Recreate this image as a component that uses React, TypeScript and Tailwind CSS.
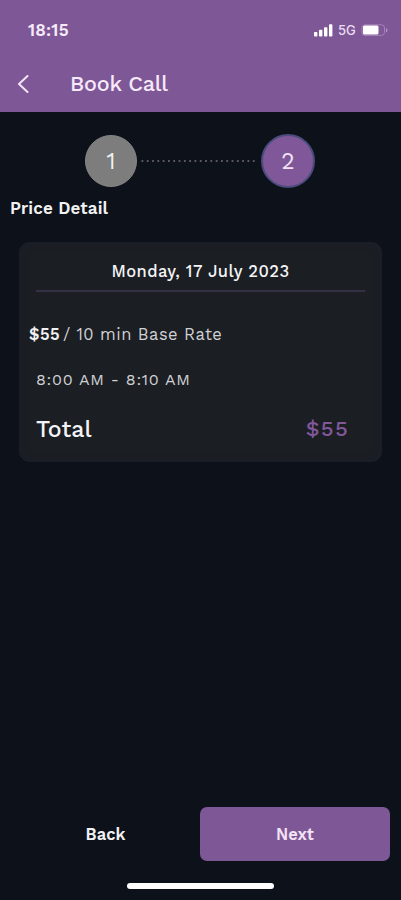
type StepProps = {
  label: string;
  active?: boolean;
};

function StatusBar() {
  return (
    <div className="flex h-[60px] items-center justify-between pl-[28px] pr-[13px]">
      <span className="text-[17px] font-semibold leading-none tracking-[0.2px] text-[#f6e9fa]">18:15</span>
      <div className="flex items-center">
        <svg className="h-[13px] w-[20px]" viewBox="0 0 20 13" fill="#fff">
          <rect x="0" y="8" width="3.4" height="4.5" rx="0.8" />
          <rect x="5" y="5.8" width="3.4" height="6.7" rx="0.8" />
          <rect x="10" y="3.2" width="3.4" height="9.3" rx="0.8" />
          <rect x="15" y="0.3" width="3.4" height="12.2" rx="0.8" />
        </svg>
        <span className="ml-[4px] mt-[1px] w-[19px] font-['Inter',sans-serif] text-[13px] font-medium leading-none text-[#eadcf1]">5G</span>
        <svg className="ml-[4px] h-[13px] w-[27px]" viewBox="0 0 27 13" fill="none">
          <rect x="1" y="0.8" width="22.5" height="10.6" rx="3" stroke="#a583b7" />
          <rect x="2" y="1.600" width="15.5" height="9" rx="1.5" fill="#fff" />
          <path d="M25 4c2 .8 2 3.6 0 4.4z" fill="#b697c5" />
        </svg>
      </div>
    </div>
  );
}

function Step({ label, active }: StepProps) {
  return (
    <div
      className={
        active
          ? "flex size-[54px] items-center justify-center rounded-full border-2 border-[#494c7c] bg-[#80589a] pt-[2px] text-[23px] text-[#f3e3f5]"
          : "flex size-[52px] items-center justify-center rounded-full border border-[#858585] bg-[#7d7d7d] pt-[2px] text-[23px] text-[#f0f0f0]"
      }
    >
      {label}
    </div>
  );
}

export default function App() {
  return (
    <main className="flex h-[900px] w-[401px] flex-col overflow-hidden bg-[#0d1119] font-['Work_Sans','Inter',sans-serif] text-[#f1f1f3]">
      <header className="h-[112px] shrink-0 bg-[#7e5796]">
        <StatusBar />
        <div className="flex h-[47px] items-center pl-[17px]">
          <button type="button" aria-label="Go back" className="w-[53px]">
            <svg className="h-[18px] w-[12px]" viewBox="0 0 12 18" fill="none" stroke="#f3e3f5" strokeWidth="2">
              <path d="M10.500 1 2 9l8.5 8" strokeLinecap="round" strokeLinejoin="round" />
            </svg>
          </button>
          <h1 className="whitespace-nowrap text-[21.5px] font-medium leading-none tracking-[-0.2px] text-[#f6e9fa]">Book Call</h1>
        </div>
      </header>

      <div className="flex h-[98px] shrink-0 items-center pl-[85px]">
        <Step label="1" />
        <svg className="mx-[4px] h-[2px] w-[116px]" viewBox="0 0 116 2">
          <line x1="0.5" y1="1" x2="116" y2="1" stroke="#77727f" strokeWidth="1.6" strokeDasharray="1.8 3.5" />
        </svg>
        <Step label="2" active />
      </div>

      <h2 className="-mt-[11px] h-[20px] pl-[10px] text-[17px] font-semibold leading-[19px] tracking-[0.1px]">Price Detail</h2>

      <section className="ml-[19px] mt-[23px] h-[220px] w-[363px] rounded-[11px] bg-[#1b1e23] shadow-[inset_0_0_8px_#1c1f2b]">
        <div className="mx-[17px] flex h-[50px] items-center justify-center border-b-2 border-[#343044] pt-[12px] text-[16.5px] font-medium tracking-[0.45px] text-[#f4f4f6]">
          <span className="whitespace-nowrap">Monday, 17 July 2023</span>
        </div>
        <div className="mt-[33px] flex h-[20px] items-center whitespace-nowrap pl-[10px] text-[16.5px] tracking-[0.45px] text-[#d0d1d4]">
          <span className="font-semibold text-[#f0f0f2]">$55</span>
          <span className="ml-[3px]">/ 10 min Base Rate</span>
        </div>
        <p className="mt-[24px] h-[20px] whitespace-nowrap pl-[17px] text-[16px] leading-[21px] tracking-[0.72px] text-[#cfd0d3]">8:00 AM - 8:10 AM</p>
        <div className="mt-[26px] flex h-[30px] items-center justify-between pl-[17px] pr-[33px]">
          <span className="text-[23px] font-medium text-[#f4f4f6]">Total</span>
          <span className="pb-[3px] text-[22px] font-medium leading-none tracking-[1.3px] text-[#80589a]">$55</span>
        </div>
      </section>

      <footer className="mt-auto h-[93px] shrink-0 pl-[11px]">
        <div className="flex h-[54px]">
          <button type="button" className="w-[189px] pt-[3px] text-[16.5px] font-semibold">Back</button>
          <button type="button" className="w-[190px] rounded-[7px] bg-[#7e5796] pt-[3px] text-[16.5px] font-semibold text-[#f3e3f5]">Next</button>
        </div>
        <div className="ml-[116px] mt-[22px] h-[6px] w-[147px] rounded-full bg-white" />
      </footer>
    </main>
  );
}
